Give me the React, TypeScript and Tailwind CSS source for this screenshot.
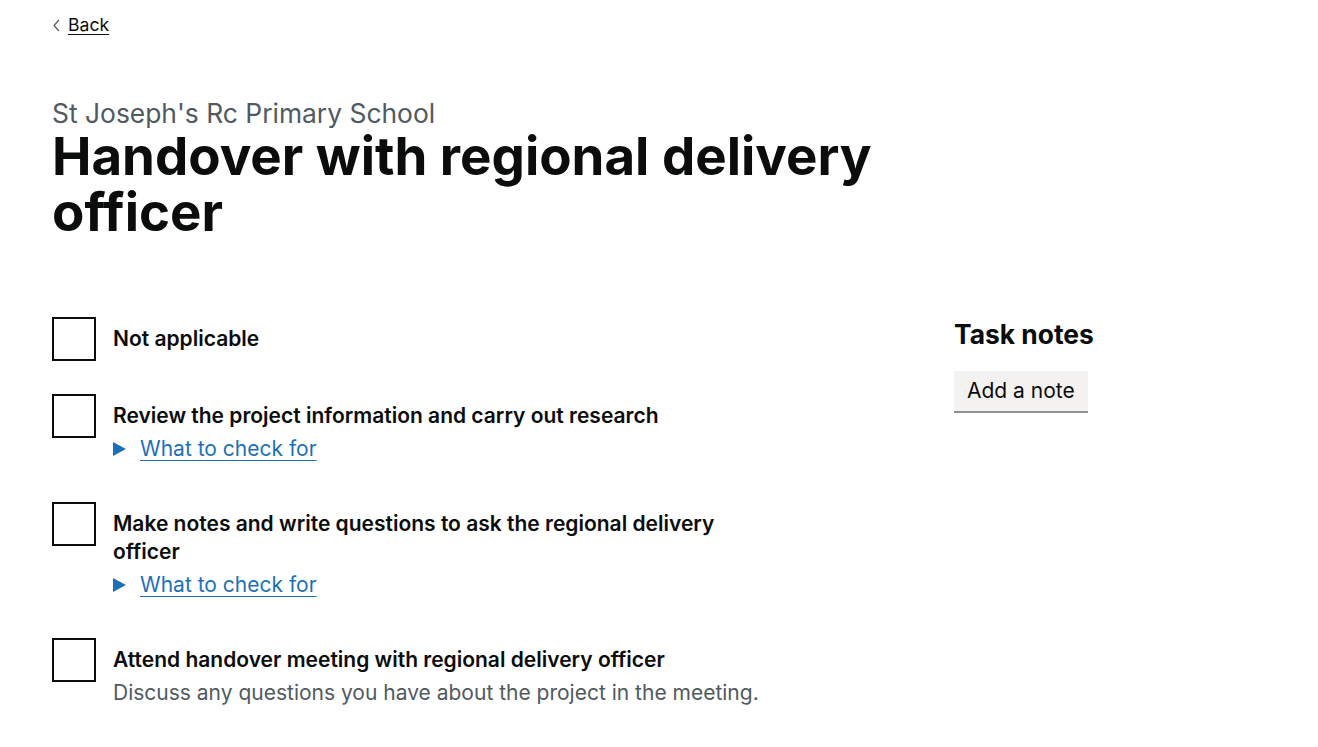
import React from "react";

const font = { fontFamily: "Inter, 'Noto Sans', Arial, sans-serif" };

function Checkbox() {
  return <div className="w-[44px] h-[44px] border-2 border-[#0b0c0c] bg-white shrink-0" />;
}

function Details() {
  return (
    <div className="flex items-center mt-[6px] mb-[8px] h-[25px]">
      <svg width="13" height="14" viewBox="0 0 13 14" className="mr-[14px]">
        <polygon points="0,0 13,7 0,14" fill="#1d70b8" />
      </svg>
      <a href="#" className="text-[21px] leading-[25px] text-[#1d70b8] underline underline-offset-[4px] decoration-1">
        What to check for
      </a>
    </div>
  );
}

function Item({ label, children, last }: { label: string; children?: React.ReactNode; last?: boolean }) {
  return (
    <div className={`flex items-start ${last ? "" : "mb-[33px]"}`}>
      <Checkbox />
      <div className="pl-[17px] pt-[8px] w-[677px]">
        <div className="text-[21px] leading-[28px] font-semibold text-[#0b0c0c]">{label}</div>
        {children}
      </div>
    </div>
  );
}

export default function App() {
  return (
    <div className="min-h-[747px] bg-white text-[#0b0c0c]" style={font}>
      <div className="px-[52px] pt-[12px]">
        <a href="#" className="inline-flex items-center text-[17.6px] leading-[26px] text-[#0b0c0c]">
          <svg width="8" height="13" viewBox="0 0 8 13" className="mr-[8px]">
            <polyline points="7,1 2,6.5 7,12" fill="none" stroke="#505a5f" strokeWidth="1.2" />
          </svg>
          <span className="underline underline-offset-[3px]">Back</span>
        </a>

        <div className="mt-[60px]">
          <div className="text-[26.4px] leading-[30px] text-[#505a5f]">St Joseph's Rc Primary School</div>
          <h1 className="text-[52.8px] leading-[56px] font-bold w-[880px]">
            Handover with regional delivery officer
          </h1>
        </div>

        <div className="flex mt-[77px]">
          <div className="w-[902px]">
            <Item label="Not applicable" />
            <Item label="Review the project information and carry out research">
              <Details />
            </Item>
            <Item label="Make notes and write questions to ask the regional delivery officer">
              <Details />
            </Item>
            <Item label="Attend handover meeting with regional delivery officer" last>
              <div className="mt-[6px] text-[21px] leading-[25px] text-[#505a5f]">
                Discuss any questions you have about the project in the meeting.
              </div>
            </Item>
          </div>
          <div className="w-[300px]">
            <h2 className="text-[26.4px] leading-[30px] font-bold pt-[2px]">Task notes</h2>
            <button className="mt-[22px] bg-[#f3f2f1] text-[21px] leading-[25px] px-[13px] pt-[7px] pb-[8px] shadow-[0_2px_0_#929191] text-[#0b0c0c]">
              Add a note
            </button>
          </div>
        </div>
      </div>
    </div>
  );
}
